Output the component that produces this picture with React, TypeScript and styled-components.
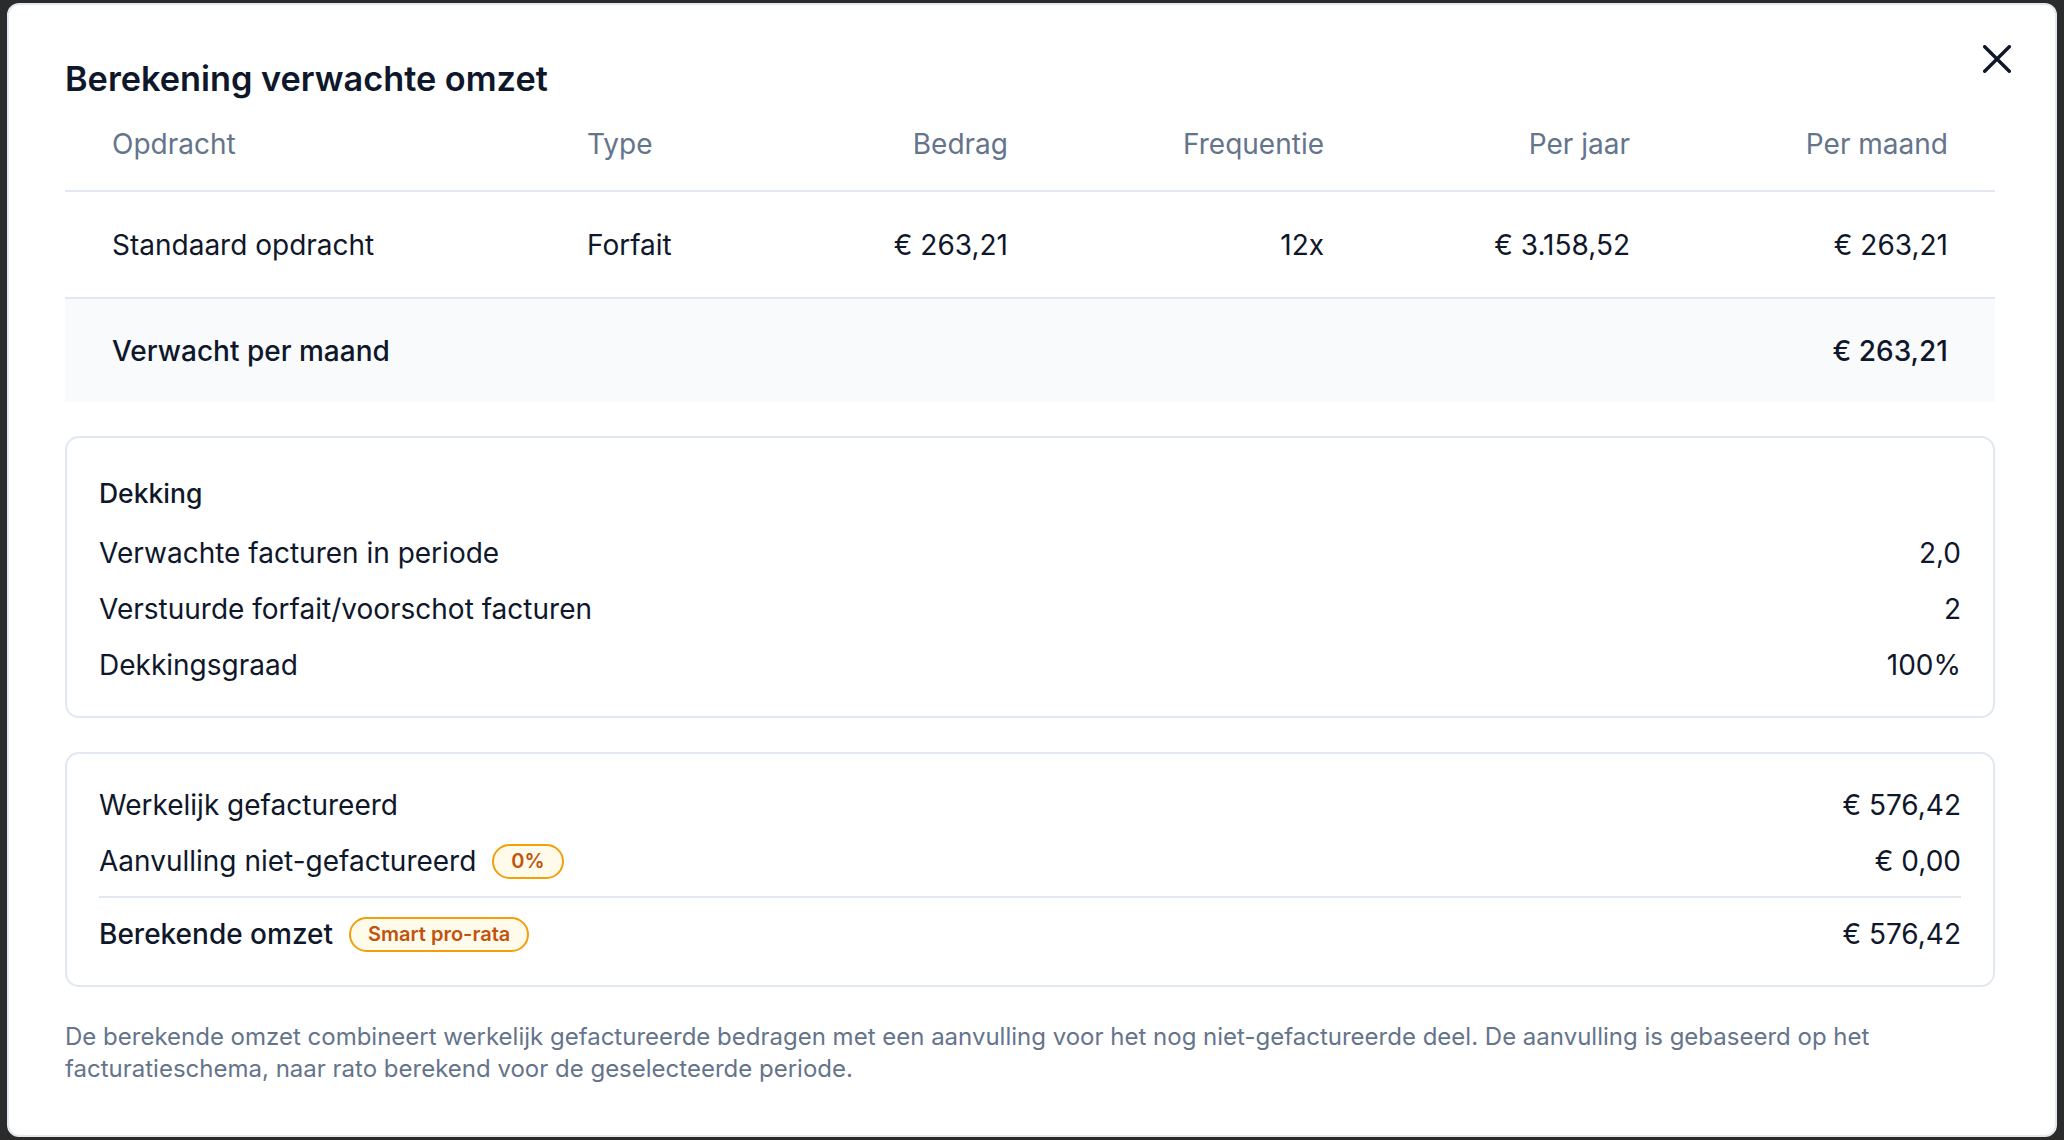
import React from "react";
import styled, { createGlobalStyle } from "styled-components";

type Line = {
  opdracht: string;
  type: string;
  bedrag: string;
  frequentie: string;
  perJaar: string;
  perMaand: string;
};

const LINES: Line[] = [
  {
    opdracht: "Standaard opdracht",
    type: "Forfait",
    bedrag: "€ 263,21",
    frequentie: "12x",
    perJaar: "€ 3.158,52",
    perMaand: "€ 263,21",
  },
];

const COVERAGE = [
  { label: "Verwachte facturen in periode", value: "2,0" },
  { label: "Verstuurde forfait/voorschot facturen", value: "2" },
  { label: "Dekkingsgraad", value: "100%" },
];

const GlobalStyle = createGlobalStyle`
  html, body {
    margin: 0;
    padding: 0;
  }

  body {
    background: #2b2b2b;
    font-family: Inter, "Noto Sans", sans-serif;
    color: #0f172a;
  }
`;

const Backdrop = styled.div`
  height: 100vh;
  display: flex;
  align-items: flex-start;
  justify-content: center;
  overflow: hidden;
`;

const Dialog = styled.div`
  position: relative;
  box-sizing: border-box;
  width: 2050px;
  margin-top: 3px;
  background: #ffffff;
  border: 2px solid #e2e8f0;
  border-radius: 12px;
  padding: 55px 60px 50px 56px;
`;

const CloseButton = styled.button`
  position: absolute;
  top: 40px;
  right: 44px;
  width: 28px;
  height: 28px;
  padding: 0;
  border: none;
  background: none;
  color: #0f172a;
  cursor: pointer;
  display: flex;
`;

const Title = styled.h2`
  margin: 0;
  font-size: 34.3px;
  line-height: 37px;
  font-weight: 600;
`;

const TableRow = styled.div<{ $height: number; $shaded?: boolean; $divider?: boolean }>`
  display: grid;
  grid-template-columns: 475px 200px 221px 316px 306px 318px;
  align-items: center;
  height: ${(p) => p.$height}px;
  padding: 0 47px 0 47px;
  background: ${(p) => (p.$shaded ? "#f8fafc" : "transparent")};
  border-bottom: ${(p) => (p.$divider ? "2px solid #e2e8f0" : "none")};
`;

const Cell = styled.div<{ $align?: "left" | "right"; $head?: boolean; $strong?: boolean }>`
  text-align: ${(p) => p.$align ?? "left"};
  font-size: 28px;
  line-height: 42px;
  font-weight: ${(p) => (p.$strong ? 500 : 400)};
  color: ${(p) => (p.$head ? "#64748b" : "#0f172a")};
  white-space: nowrap;
`;

const Card = styled.section`
  margin-top: 34px;
  border: 2px solid #e2e8f0;
  border-radius: 14px;
  padding: 30px 32px;
  display: flex;
  flex-direction: column;
  gap: 14px;
`;

const CardTitle = styled.h3`
  margin: 6px 0 5px;
  font-size: 26.5px;
  line-height: 39px;
  font-weight: 500;
`;

const SummaryRow = styled.div`
  display: flex;
  align-items: center;
  justify-content: space-between;
  height: 42px;
`;

const Label = styled.span<{ $strong?: boolean }>`
  display: flex;
  align-items: center;
  gap: 16px;
  font-size: 28px;
  line-height: 42px;
  font-weight: ${(p) => (p.$strong ? 500 : 400)};
`;

const Value = styled.span<{ $strong?: boolean }>`
  font-size: 28px;
  line-height: 42px;
  font-weight: ${(p) => (p.$strong ? 500 : 400)};
`;

const Badge = styled.span`
  display: inline-flex;
  align-items: center;
  box-sizing: border-box;
  height: 35px;
  padding: 0 17px;
  border: 2px solid #f59e0b;
  border-radius: 999px;
  background: #fffbeb;
  color: #c2530c;
  font-size: 20px;
  font-weight: 600;
  line-height: 1;
`;

const Divider = styled.hr`
  margin: 0 0 1px;
  border: none;
  height: 2px;
  background: #e2e8f0;
`;

const Note = styled.p`
  margin: 34px 0 0;
  font-size: 24px;
  line-height: 32px;
  color: #64748b;
`;

const CloseIcon = () => (
  <svg width="28" height="28" viewBox="0 0 28 28" fill="none">
    <path
      d="M1.7 1.7 26.3 26.3M26.3 1.7 1.7 26.3"
      stroke="currentColor"
      strokeWidth="3.4"
      strokeLinecap="round"
    />
  </svg>
);

const App = () => {
  return (
    <>
      <GlobalStyle />
      <Backdrop>
        <Dialog role="dialog">
          <CloseButton aria-label="Sluiten">
            <CloseIcon />
          </CloseButton>
          <Title>Berekening verwachte omzet</Title>

          <TableRow $height={93} $divider>
            <Cell $head>Opdracht</Cell>
            <Cell $head>Type</Cell>
            <Cell $head $align="right">Bedrag</Cell>
            <Cell $head $align="right">Frequentie</Cell>
            <Cell $head $align="right">Per jaar</Cell>
            <Cell $head $align="right">Per maand</Cell>
          </TableRow>
          {LINES.map((line) => (
            <TableRow key={line.opdracht} $height={105} $divider>
              <Cell>{line.opdracht}</Cell>
              <Cell>{line.type}</Cell>
              <Cell $align="right">{line.bedrag}</Cell>
              <Cell $align="right">{line.frequentie}</Cell>
              <Cell $align="right">{line.perJaar}</Cell>
              <Cell $align="right">{line.perMaand}</Cell>
            </TableRow>
          ))}
          <TableRow $height={103} $shaded>
            <Cell $strong>Verwacht per maand</Cell>
            <Cell />
            <Cell />
            <Cell />
            <Cell />
            <Cell $strong $align="right">€ 263,21</Cell>
          </TableRow>

          <Card>
            <CardTitle>Dekking</CardTitle>
            {COVERAGE.map((row) => (
              <SummaryRow key={row.label}>
                <Label>{row.label}</Label>
                <Value>{row.value}</Value>
              </SummaryRow>
            ))}
          </Card>

          <Card>
            <SummaryRow>
              <Label>Werkelijk gefactureerd</Label>
              <Value>€ 576,42</Value>
            </SummaryRow>
            <SummaryRow>
              <Label>
                Aanvulling niet-gefactureerd
                <Badge>0%</Badge>
              </Label>
              <Value>€ 0,00</Value>
            </SummaryRow>
            <Divider />
            <SummaryRow>
              <Label $strong>
                Berekende omzet
                <Badge>Smart pro-rata</Badge>
              </Label>
              <Value>€ 576,42</Value>
            </SummaryRow>
          </Card>

          <Note>
            De berekende omzet combineert werkelijk gefactureerde bedragen met een aanvulling
            voor het nog niet-gefactureerde deel. De aanvulling is gebaseerd op het
            facturatieschema, naar rato berekend voor de geselecteerde periode.
          </Note>
        </Dialog>
      </Backdrop>
    </>
  );
};

export default App;
